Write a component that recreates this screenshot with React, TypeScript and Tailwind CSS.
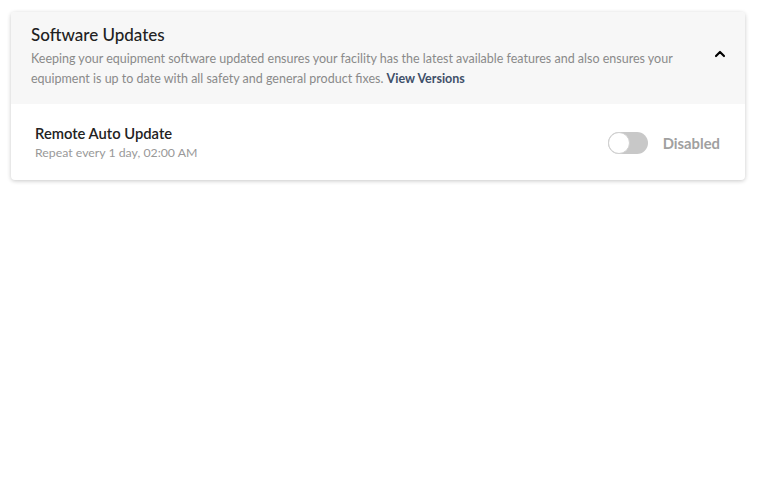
import { ChevronUp } from 'lucide-react'

export default function App() {
  return (
    <div className="min-h-screen bg-white pl-[11px] pr-[15px] pt-[12px]" style={{ fontFamily: 'Lato, "Open Sans", sans-serif' }}>
      <div className="overflow-hidden rounded-[4px] bg-white shadow-[0_1px_4px_rgba(0,0,0,0.22)]">
        {/* Header */}
        <div className="flex items-center bg-[#f7f7f7] pl-5 pr-[17px] pt-[12px] pb-[15px]">
          <div className="flex-1">
            <h2 className="text-[17px] leading-[22px] font-medium text-[#222]">Software Updates</h2>
            <p className="mt-[3px] pr-4 text-[12.5px] leading-[20px] text-[#8a8a8a]">
              Keeping your equipment software updated ensures your facility has the latest available features and also ensures your
              <br />
              equipment is up to date with all safety and general product fixes.{' '}
              <span className="font-bold text-[#3f5069]">View Versions</span>
            </p>
          </div>
          <ChevronUp className="mb-[6px] h-4 w-4 text-black" strokeWidth={3.2} />
        </div>

        {/* Row */}
        <div className="flex items-center pl-6 pr-[25px] pt-[19px] pb-[17px]">
          <div className="flex-1">
            <div className="text-[14.75px] leading-[20px] font-semibold text-[#222]">Remote Auto Update</div>
            <div className="text-[12.3px] leading-[20px] text-[#999]">Repeat every 1 day, 02:00 AM</div>
          </div>
          <div className="flex items-center gap-[15px]">
            <div className="relative h-[22px] w-[40px] rounded-full bg-[#c8c8c8]">
              <span className="absolute left-0 top-0 h-[22px] w-[22px] rounded-full border border-[#d0d0d0] bg-white" />
            </div>
            <span className="text-[14.8px] font-bold text-[#a0a0a0]">Disabled</span>
          </div>
        </div>
      </div>
    </div>
  )
}
